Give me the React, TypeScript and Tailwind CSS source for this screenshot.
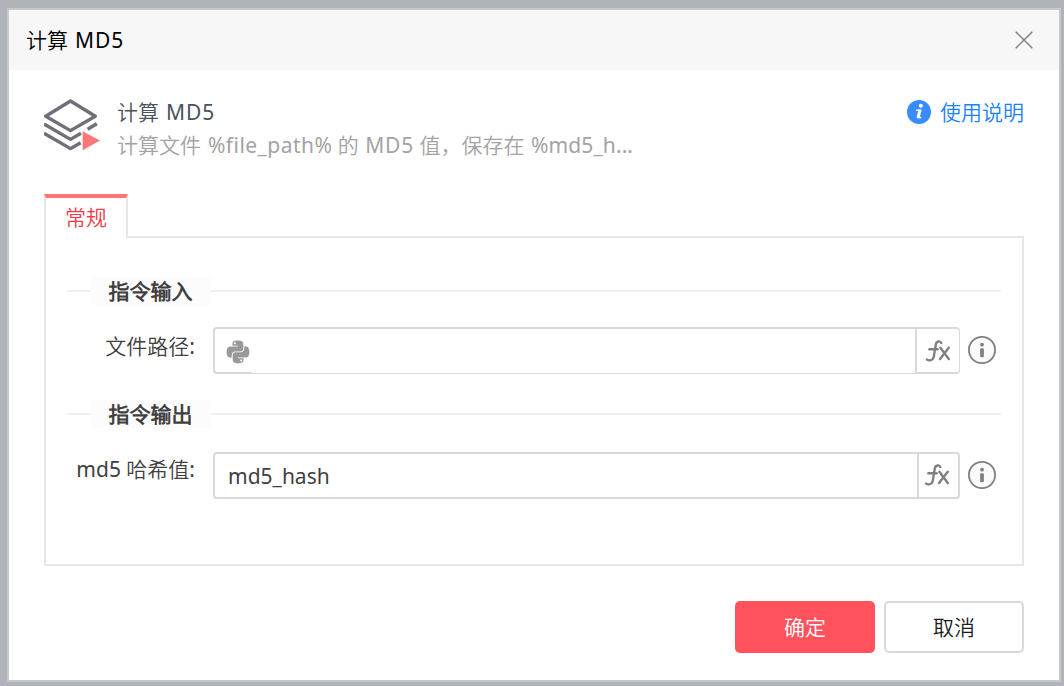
import React from "react";
import { FaPython } from "react-icons/fa";

function StackIcon() {
  return (
    <svg width="60" height="56" viewBox="0 0 60 56" className="mt-px block shrink-0" fill="none">
      <g stroke="#6f6f79" strokeWidth="3.4" strokeLinejoin="round">
        <path d="M26.5 3 51.3 18.2 26.5 32.6 1.7 18.2Z" />
        <path d="M0 26 26.5 41.4 37 35.2M43.6 31.3 52.8 25.8" />
        <path d="M0 35.2 26.5 50.6 36.6 44.8" />
      </g>
      <path d="M38.6 33.2 56 42.6 38.6 52.2Z" fill="#fa7777" />
    </svg>
  );
}

function HelpIcon() {
  return (
    <svg width="24" height="24" viewBox="0 0 24 24" className="block" fill="none">
      <circle cx="12" cy="12" r="12" fill="#388cfd" />
      <circle cx="13.9" cy="5.7" r="2" fill="#fff" />
      <path d="M9 10.3H13.3L11.3 17.5H14.2" stroke="#fff" strokeWidth="1.6" />
      <path d="M13.1 9.6 11 18" stroke="#fff" strokeWidth="3" />
    </svg>
  );
}

function InfoIcon() {
  return (
    <svg width="28" height="28" viewBox="0 0 28 28" className="block shrink-0" fill="none">
      <circle cx="14" cy="14" r="13.1" fill="#fafafa" stroke="#808080" strokeWidth="1.8" />
      <circle cx="14" cy="8.7" r="1.9" fill="#808080" />
      <rect x="12.1" y="12.2" width="3.8" height="9" rx="1.2" fill="#808080" />
    </svg>
  );
}

function FxIcon() {
  return (
    <svg width="26" height="22" viewBox="0 0 26 22" className="block" fill="none">
      <g stroke="#808080" strokeWidth="2.4" strokeLinecap="round" strokeLinejoin="round">
        <path d="M16.2 3C15.6 .6 11.4 .8 10.8 4.5L8.8 16.6C8.1 20.6 4 21 2 19.6" />
        <path d="M4.4 9.2H12.6" />
        <path d="M15.4 7.8 23.8 19M23.8 7.8 15 19" />
      </g>
    </svg>
  );
}

function SectionHeading({ children }: { children: React.ReactNode }) {
  return (
    <div className="flex h-7 items-center">
      <div className="h-0.5 w-6 bg-[#efefef]" />
      <h3 className="h-7 w-[120px] bg-[#fcfcfc] pl-[17.5px] text-[21px] leading-[29px] font-bold text-[#404040]">
        {children}
      </h3>
      <div className="h-0.5 flex-1 bg-[#efefef]" />
    </div>
  );
}

export default function App() {
  return (
    <div className="h-[686px] w-[1064px] bg-[#b0b4b9] pt-2 pl-[7px] font-['Noto_Sans','Noto_Sans_CJK_SC_DemiLight','Noto_Sans_CJK_SC_Light','Noto_Sans_CJK_SC',sans-serif] text-[21px]">
      <div className="flex h-[674px] w-[1054px] flex-col border-2 border-[#c8c8c8] bg-white">
        <header className="flex h-[60px] shrink-0 items-center justify-between bg-[#f7f7f7] pr-[26px] pl-[17px]">
          <h1 className="leading-[60px] text-black">
            计算 <span className="ml-[1.5px] tracking-[1px]">MD5</span>
          </h1>
          <svg width="18" height="18" viewBox="0 0 18 18" fill="none" stroke="#7c7c7c" strokeWidth="1.4">
            <path d="M.7.7 17.3 17.3M17.3.7.7 17.3" />
          </svg>
        </header>

        <div className="flex h-[124px] shrink-0 pt-[27px] pr-[35px] pl-[35px]">
          <StackIcon />
          <div className="ml-[13px] flex-1">
            <p className="h-[33px] leading-[30px] text-[#4b535d]">
              计算 <span className="ml-[1.5px] tracking-[1px]">MD5</span>
            </p>
            <p className="leading-[30px] whitespace-nowrap text-[#a3a3a3]">
              计算文件 <span className="ml-[1.5px] tracking-[0.45px]">%file_path%</span> 的{" "}
              <span className="ml-px tracking-[0.8px]">MD5</span> 值，保存在{" "}
              <span className="ml-px tracking-[0.1px]">%md5_h...</span>
            </p>
          </div>
          <a className="flex h-[30px] items-center gap-[9px] text-[#1b82fb]">
            <HelpIcon />
            <span className="pt-px">使用说明</span>
          </a>
        </div>

        <div className="mx-[35px] flex h-[42px] shrink-0">
          <div className="h-11 w-[84px] border-x-2 border-t-4 border-x-[#e6e6e6] border-t-[#ff7575] text-center leading-[39px] text-[#ee3b46]">
            常规
          </div>
          <div className="-mb-0.5 h-0.5 flex-1 self-end bg-[#e6e6e6]" />
        </div>

        <main className="mx-[35px] mt-0.5 h-[328px] shrink-0 border-2 border-t-0 border-[#e6e6e6] pt-[39px] pr-[21px] pl-[21px] text-[#404040]">
          <SectionHeading>指令输入</SectionHeading>
          <div className="mt-[22px] flex h-[47px]">
            <label className="w-[128px] text-right leading-[39px]">文件路径:</label>
            <div className="ml-[18px] flex w-[747px] items-start">
              <div className="flex h-[47px] w-[39px] items-center rounded-l-[4px] border-y-2 border-l-2 border-[#d9d9d9] pt-0.5 pl-[10px]">
                <FaPython className="text-[26px] text-[#999999]" />
              </div>
              <div className="h-[47px] flex-1 border-t-2 border-b border-[#d9d9d9]" />
              <div className="flex h-[47px] w-[45px] items-center justify-center rounded-r-[4px] border-2 border-r border-[#d9d9d9]">
                <FxIcon />
              </div>
            </div>
            <div className="ml-2 pt-[9px]">
              <InfoIcon />
            </div>
          </div>

          <div className="mt-[26px]">
            <SectionHeading>指令输出</SectionHeading>
          </div>
          <div className="mt-6 flex h-[47px]">
            <label className="w-[128px] text-right leading-[35px] whitespace-nowrap">md5 哈希值:</label>
            <div className="ml-[18px] flex h-[47px] w-[747px] rounded-[4px] border-2 border-[#d9d9d9]">
              <div className="flex-1 pl-[13px] leading-[45px]">md5_hash</div>
              <div className="flex w-[41px] items-center justify-center border-l-2 border-[#d9d9d9] pr-[3px] pb-0.5">
                <FxIcon />
              </div>
            </div>
            <div className="ml-2 pt-[9px]">
              <InfoIcon />
            </div>
          </div>
        </main>

        <footer className="mt-[35px] mr-[35px] flex justify-end gap-[9px]">
          <button className="h-[52px] w-[140px] rounded-[5px] bg-[#ff525c] pt-px text-white">确定</button>
          <button className="h-[52px] w-[140px] rounded-[5px] border-2 border-[#d9d9d9] bg-white pt-px text-[#1a1a1a]">
            取消
          </button>
        </footer>
      </div>
    </div>
  );
}
